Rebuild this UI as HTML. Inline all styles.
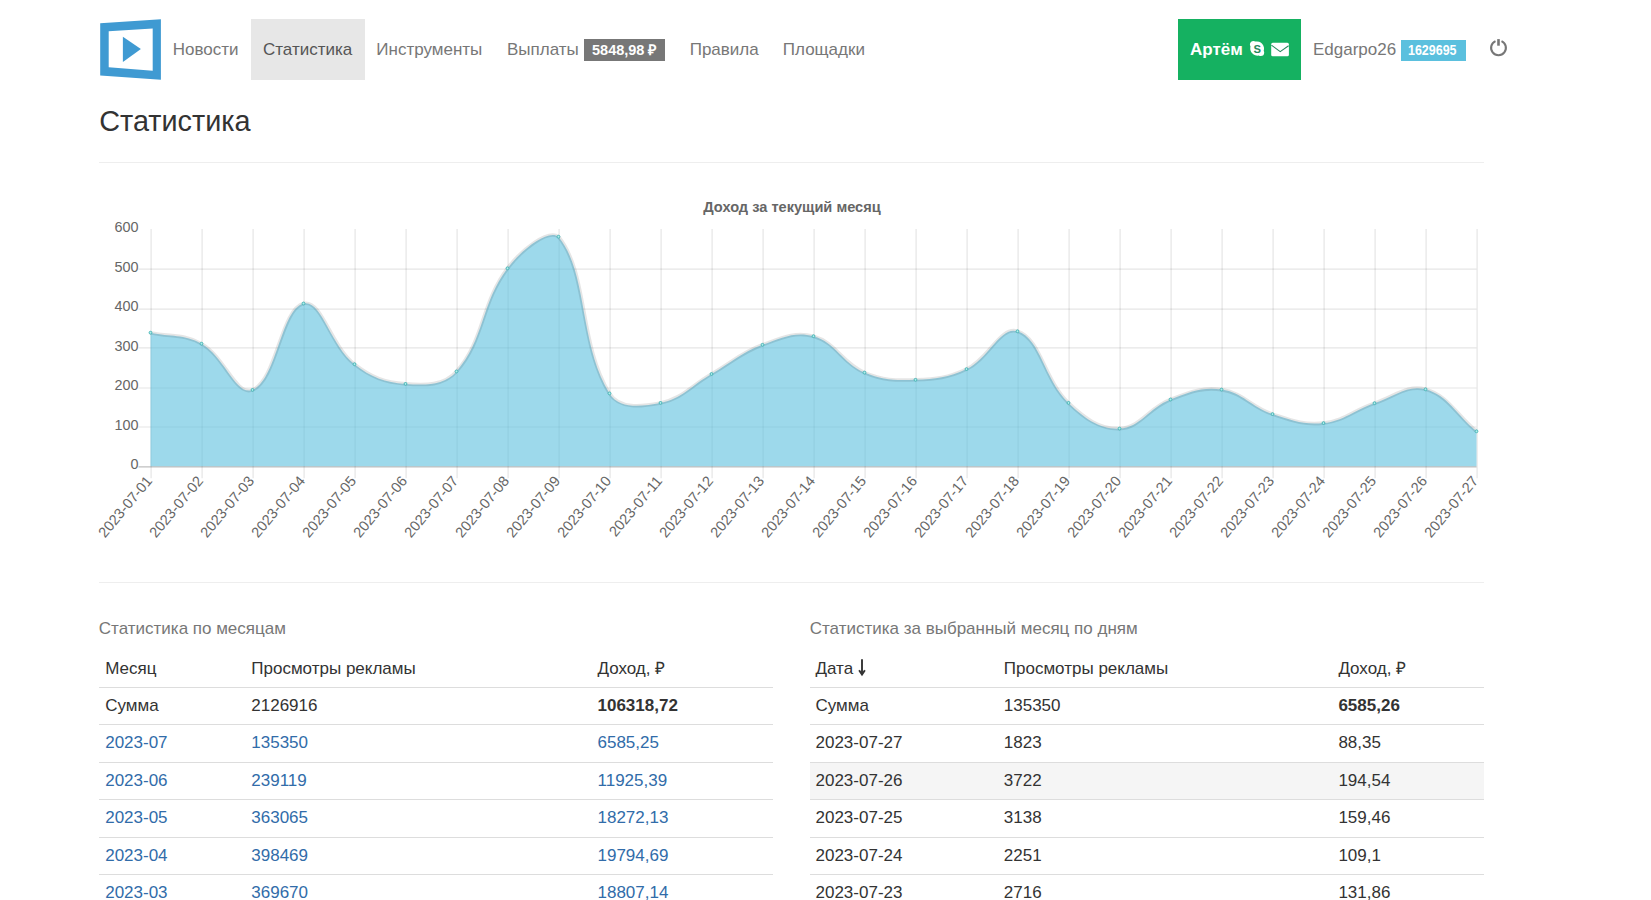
<!DOCTYPE html>
<html><head><meta charset="utf-8"><title>Статистика</title>
<style>
html,body{margin:0;padding:0;background:#fff;width:1651px;height:900px;overflow:hidden;position:relative;font-family:'Liberation Sans', sans-serif;}
.t{position:absolute;white-space:nowrap;line-height:1;font-family:'Liberation Sans', sans-serif;}
.r{position:absolute;}
.abs{position:absolute;}
</style></head><body>
<svg class="abs" style="left:0;top:0" width="200" height="100" viewBox="0 0 200 100">
<polygon fill="#3f9ad2" fill-rule="evenodd" points="100.2,23.3 160.9,19.2 160.9,79.8 100.2,75.4 100.2,23.3 108.7,31.3 108.7,67.2 152.7,70.7 152.7,28.5 108.7,31.3"/>
<polygon fill="#3f9ad2" points="122.9,36.7 140.9,49.1 122.9,62.0"/>
</svg>
<div class="t" style="left:172.8px;top:41px;font-size:17px;color:#777;">Новости</div>
<div class="r" style="left:251px;top:19px;width:114px;height:61px;background:#e7e7e7;"></div>
<div class="t" style="left:263px;top:41px;font-size:17px;color:#555;">Статистика</div>
<div class="t" style="left:376.3px;top:41px;font-size:17px;color:#777;">Инструменты</div>
<div class="t" style="left:507px;top:41px;font-size:17px;color:#777;">Выплаты</div>
<div class="r" style="left:584px;top:39px;width:81px;height:22px;background:#777;"></div>
<div class="t" style="left:592px;top:43px;font-size:14.5px;color:#fff;font-weight:bold;">5848,98 ₽</div>
<div class="t" style="left:689.7px;top:41px;font-size:17px;color:#777;">Правила</div>
<div class="t" style="left:782.8px;top:41px;font-size:17px;color:#777;">Площадки</div>
<div class="r" style="left:1178px;top:19px;width:123px;height:61px;background:#15b161;"></div>
<div class="t" style="left:1190px;top:41px;font-size:17px;color:#fff;font-weight:bold;">Артём</div>
<svg class="abs" style="left:1249px;top:40px" width="17" height="18" viewBox="0 0 17 18">
<path fill="#fff" d="M4.5 1.0 A3.5 3.5 0 0 0 0.9 4.6 c0 .8.3 1.4.6 2 A7.2 7.2 0 0 0 9.8 15.5 c.6.3 1.2.6 1.9.6 a3.5 3.5 0 0 0 3.5-3.5 c0-.7-.2-1.3-.5-1.9 A7.2 7.2 0 0 0 6.4 1.6 c-.6-.4-1.2-.6-1.9-.6z"/>
<text x="8.3" y="12.8" text-anchor="middle" font-family="Liberation Sans" font-weight="bold" font-size="11.2" fill="#24895c">S</text>
</svg>
<svg class="abs" style="left:1270px;top:42px" width="20" height="15" viewBox="0 0 20 15">
<rect x="1.2" y="0.8" width="17.7" height="13.4" rx="1.5" fill="#fff"/>
<path d="M1.4 3.1 L10.2 9.6 L18.6 3.8" fill="none" stroke="#2a8a60" stroke-width="1.1"/>
</svg>
<div class="t" style="left:1313px;top:41px;font-size:17px;color:#777;">Edgarpo26</div>
<div class="r" style="left:1401px;top:40px;width:65px;height:21px;background:#5bc0de;"></div>
<div class="t" style="left:1408.3px;top:43px;font-size:14px;color:#fff;font-weight:bold;transform:scaleX(0.89);transform-origin:0 0;">1629695</div>
<svg class="abs" style="left:1486px;top:36px" width="26" height="24" viewBox="0 0 26 24">
<path d="M9.5 5.1 A7.4 7.4 0 1 0 15.5 5.1" fill="none" stroke="#777" stroke-width="2.1"/>
<line x1="12.5" y1="3.1" x2="12.5" y2="9.7" stroke="#777" stroke-width="2.6"/>
</svg>
<div class="t" style="left:99.3px;top:107px;font-size:28.8px;color:#333;">Статистика</div>
<div class="r" style="left:99px;top:162px;width:1385px;height:1px;background:#eee;"></div>
<svg class="abs" style="left:0;top:0" width="1651" height="600" viewBox="0 0 1651 600">
<text x="792" y="212" text-anchor="middle" font-family="Liberation Sans" font-weight="bold" font-size="14.6" fill="#666">Доход за текущий месяц</text>
<line x1="138.5" y1="427.00" x2="1476.5" y2="427.00" stroke="rgba(0,0,0,0.1)" stroke-width="1.2"/>
<line x1="138.5" y1="388.00" x2="1476.5" y2="388.00" stroke="rgba(0,0,0,0.1)" stroke-width="1.2"/>
<line x1="138.5" y1="347.90" x2="1476.5" y2="347.90" stroke="rgba(0,0,0,0.1)" stroke-width="1.2"/>
<line x1="138.5" y1="309.10" x2="1476.5" y2="309.10" stroke="rgba(0,0,0,0.1)" stroke-width="1.2"/>
<line x1="138.5" y1="269.20" x2="1476.5" y2="269.20" stroke="rgba(0,0,0,0.1)" stroke-width="1.2"/>
<line x1="151.10" y1="229" x2="151.10" y2="478.2" stroke="rgba(0,0,0,0.1)" stroke-width="1.2"/>
<line x1="202.10" y1="229" x2="202.10" y2="478.2" stroke="rgba(0,0,0,0.1)" stroke-width="1.2"/>
<line x1="253.10" y1="229" x2="253.10" y2="478.2" stroke="rgba(0,0,0,0.1)" stroke-width="1.2"/>
<line x1="304.10" y1="229" x2="304.10" y2="478.2" stroke="rgba(0,0,0,0.1)" stroke-width="1.2"/>
<line x1="355.10" y1="229" x2="355.10" y2="478.2" stroke="rgba(0,0,0,0.1)" stroke-width="1.2"/>
<line x1="406.10" y1="229" x2="406.10" y2="478.2" stroke="rgba(0,0,0,0.1)" stroke-width="1.2"/>
<line x1="457.10" y1="229" x2="457.10" y2="478.2" stroke="rgba(0,0,0,0.1)" stroke-width="1.2"/>
<line x1="508.10" y1="229" x2="508.10" y2="478.2" stroke="rgba(0,0,0,0.1)" stroke-width="1.2"/>
<line x1="559.10" y1="229" x2="559.10" y2="478.2" stroke="rgba(0,0,0,0.1)" stroke-width="1.2"/>
<line x1="610.10" y1="229" x2="610.10" y2="478.2" stroke="rgba(0,0,0,0.1)" stroke-width="1.2"/>
<line x1="661.10" y1="229" x2="661.10" y2="478.2" stroke="rgba(0,0,0,0.1)" stroke-width="1.2"/>
<line x1="712.10" y1="229" x2="712.10" y2="478.2" stroke="rgba(0,0,0,0.1)" stroke-width="1.2"/>
<line x1="763.10" y1="229" x2="763.10" y2="478.2" stroke="rgba(0,0,0,0.1)" stroke-width="1.2"/>
<line x1="814.10" y1="229" x2="814.10" y2="478.2" stroke="rgba(0,0,0,0.1)" stroke-width="1.2"/>
<line x1="865.10" y1="229" x2="865.10" y2="478.2" stroke="rgba(0,0,0,0.1)" stroke-width="1.2"/>
<line x1="916.10" y1="229" x2="916.10" y2="478.2" stroke="rgba(0,0,0,0.1)" stroke-width="1.2"/>
<line x1="967.10" y1="229" x2="967.10" y2="478.2" stroke="rgba(0,0,0,0.1)" stroke-width="1.2"/>
<line x1="1018.10" y1="229" x2="1018.10" y2="478.2" stroke="rgba(0,0,0,0.1)" stroke-width="1.2"/>
<line x1="1069.10" y1="229" x2="1069.10" y2="478.2" stroke="rgba(0,0,0,0.1)" stroke-width="1.2"/>
<line x1="1120.10" y1="229" x2="1120.10" y2="478.2" stroke="rgba(0,0,0,0.1)" stroke-width="1.2"/>
<line x1="1171.10" y1="229" x2="1171.10" y2="478.2" stroke="rgba(0,0,0,0.1)" stroke-width="1.2"/>
<line x1="1222.10" y1="229" x2="1222.10" y2="478.2" stroke="rgba(0,0,0,0.1)" stroke-width="1.2"/>
<line x1="1273.10" y1="229" x2="1273.10" y2="478.2" stroke="rgba(0,0,0,0.1)" stroke-width="1.2"/>
<line x1="1324.10" y1="229" x2="1324.10" y2="478.2" stroke="rgba(0,0,0,0.1)" stroke-width="1.2"/>
<line x1="1375.10" y1="229" x2="1375.10" y2="478.2" stroke="rgba(0,0,0,0.1)" stroke-width="1.2"/>
<line x1="1426.10" y1="229" x2="1426.10" y2="478.2" stroke="rgba(0,0,0,0.1)" stroke-width="1.2"/>
<line x1="1477.10" y1="229" x2="1477.10" y2="478.2" stroke="rgba(0,0,0,0.1)" stroke-width="1.2"/>
<path d="M150.50,332.70 C170.90,337.10 183.91,333.83 201.50,343.70 C224.71,356.71 235.90,396.44 252.50,389.90 C276.70,380.36 280.71,309.24 303.50,303.50 C321.51,298.96 330.35,345.17 354.50,364.20 C371.15,377.33 384.69,382.43 405.50,383.90 C425.49,385.31 443.71,385.89 456.50,371.40 C484.51,339.65 480.69,303.71 507.50,268.30 C521.49,249.83 547.61,229.00 558.50,236.70 C588.41,273.38 578.47,342.84 609.50,393.40 C619.27,409.32 641.34,406.54 660.50,402.90 C682.14,398.78 691.13,385.61 711.50,374.00 C731.93,362.37 740.80,352.84 762.50,344.80 C781.60,337.72 795.05,331.17 813.50,336.20 C835.85,342.29 842.11,363.03 864.50,372.60 C882.91,380.47 895.22,380.50 915.50,379.80 C936.02,379.10 948.11,377.85 966.50,369.10 C988.91,358.45 1000.39,325.63 1017.50,331.30 C1041.19,339.15 1043.77,379.31 1068.50,402.90 C1084.57,418.23 1099.38,429.27 1119.50,428.60 C1140.18,427.91 1148.85,407.78 1170.50,399.50 C1189.65,392.18 1201.97,386.80 1221.50,389.60 C1242.77,392.64 1251.20,407.10 1272.50,414.10 C1292.00,420.50 1303.67,425.22 1323.50,423.10 C1344.47,420.86 1353.74,410.08 1374.50,403.20 C1394.54,396.56 1407.37,384.30 1425.50,389.30 C1448.17,395.54 1456.10,414.50 1476.50,431.30 L1476.50,466.20 L150.50,466.20 Z" fill="rgba(91,192,222,0.6)"/>
<path d="M150.50,332.70 C170.90,337.10 183.91,333.83 201.50,343.70 C224.71,356.71 235.90,396.44 252.50,389.90 C276.70,380.36 280.71,309.24 303.50,303.50 C321.51,298.96 330.35,345.17 354.50,364.20 C371.15,377.33 384.69,382.43 405.50,383.90 C425.49,385.31 443.71,385.89 456.50,371.40 C484.51,339.65 480.69,303.71 507.50,268.30 C521.49,249.83 547.61,229.00 558.50,236.70 C588.41,273.38 578.47,342.84 609.50,393.40 C619.27,409.32 641.34,406.54 660.50,402.90 C682.14,398.78 691.13,385.61 711.50,374.00 C731.93,362.37 740.80,352.84 762.50,344.80 C781.60,337.72 795.05,331.17 813.50,336.20 C835.85,342.29 842.11,363.03 864.50,372.60 C882.91,380.47 895.22,380.50 915.50,379.80 C936.02,379.10 948.11,377.85 966.50,369.10 C988.91,358.45 1000.39,325.63 1017.50,331.30 C1041.19,339.15 1043.77,379.31 1068.50,402.90 C1084.57,418.23 1099.38,429.27 1119.50,428.60 C1140.18,427.91 1148.85,407.78 1170.50,399.50 C1189.65,392.18 1201.97,386.80 1221.50,389.60 C1242.77,392.64 1251.20,407.10 1272.50,414.10 C1292.00,420.50 1303.67,425.22 1323.50,423.10 C1344.47,420.86 1353.74,410.08 1374.50,403.20 C1394.54,396.56 1407.37,384.30 1425.50,389.30 C1448.17,395.54 1456.10,414.50 1476.50,431.30" fill="none" stroke="rgba(0,0,0,0.1)" stroke-width="3.6"/>
<line x1="138.5" y1="466.8" x2="1476.5" y2="466.8" stroke="rgba(0,0,0,0.25)" stroke-width="1.2"/>
<circle cx="150.50" cy="332.70" r="1.4" fill="#b5ecec" stroke="#48b9b9" stroke-width="1.0"/>
<circle cx="201.50" cy="343.70" r="1.4" fill="#b5ecec" stroke="#48b9b9" stroke-width="1.0"/>
<circle cx="252.50" cy="389.90" r="1.4" fill="#b5ecec" stroke="#48b9b9" stroke-width="1.0"/>
<circle cx="303.50" cy="303.50" r="1.4" fill="#b5ecec" stroke="#48b9b9" stroke-width="1.0"/>
<circle cx="354.50" cy="364.20" r="1.4" fill="#b5ecec" stroke="#48b9b9" stroke-width="1.0"/>
<circle cx="405.50" cy="383.90" r="1.4" fill="#b5ecec" stroke="#48b9b9" stroke-width="1.0"/>
<circle cx="456.50" cy="371.40" r="1.4" fill="#b5ecec" stroke="#48b9b9" stroke-width="1.0"/>
<circle cx="507.50" cy="268.30" r="1.4" fill="#b5ecec" stroke="#48b9b9" stroke-width="1.0"/>
<circle cx="558.50" cy="236.70" r="1.4" fill="#b5ecec" stroke="#48b9b9" stroke-width="1.0"/>
<circle cx="609.50" cy="393.40" r="1.4" fill="#b5ecec" stroke="#48b9b9" stroke-width="1.0"/>
<circle cx="660.50" cy="402.90" r="1.4" fill="#b5ecec" stroke="#48b9b9" stroke-width="1.0"/>
<circle cx="711.50" cy="374.00" r="1.4" fill="#b5ecec" stroke="#48b9b9" stroke-width="1.0"/>
<circle cx="762.50" cy="344.80" r="1.4" fill="#b5ecec" stroke="#48b9b9" stroke-width="1.0"/>
<circle cx="813.50" cy="336.20" r="1.4" fill="#b5ecec" stroke="#48b9b9" stroke-width="1.0"/>
<circle cx="864.50" cy="372.60" r="1.4" fill="#b5ecec" stroke="#48b9b9" stroke-width="1.0"/>
<circle cx="915.50" cy="379.80" r="1.4" fill="#b5ecec" stroke="#48b9b9" stroke-width="1.0"/>
<circle cx="966.50" cy="369.10" r="1.4" fill="#b5ecec" stroke="#48b9b9" stroke-width="1.0"/>
<circle cx="1017.50" cy="331.30" r="1.4" fill="#b5ecec" stroke="#48b9b9" stroke-width="1.0"/>
<circle cx="1068.50" cy="402.90" r="1.4" fill="#b5ecec" stroke="#48b9b9" stroke-width="1.0"/>
<circle cx="1119.50" cy="428.60" r="1.4" fill="#b5ecec" stroke="#48b9b9" stroke-width="1.0"/>
<circle cx="1170.50" cy="399.50" r="1.4" fill="#b5ecec" stroke="#48b9b9" stroke-width="1.0"/>
<circle cx="1221.50" cy="389.60" r="1.4" fill="#b5ecec" stroke="#48b9b9" stroke-width="1.0"/>
<circle cx="1272.50" cy="414.10" r="1.4" fill="#b5ecec" stroke="#48b9b9" stroke-width="1.0"/>
<circle cx="1323.50" cy="423.10" r="1.4" fill="#b5ecec" stroke="#48b9b9" stroke-width="1.0"/>
<circle cx="1374.50" cy="403.20" r="1.4" fill="#b5ecec" stroke="#48b9b9" stroke-width="1.0"/>
<circle cx="1425.50" cy="389.30" r="1.4" fill="#b5ecec" stroke="#48b9b9" stroke-width="1.0"/>
<circle cx="1476.50" cy="431.30" r="1.4" fill="#b5ecec" stroke="#48b9b9" stroke-width="1.0"/>
<text x="138.6" y="469.40" text-anchor="end" font-family="Liberation Sans" font-size="14.4" fill="#666">0</text>
<text x="138.6" y="429.87" text-anchor="end" font-family="Liberation Sans" font-size="14.4" fill="#666">100</text>
<text x="138.6" y="390.34" text-anchor="end" font-family="Liberation Sans" font-size="14.4" fill="#666">200</text>
<text x="138.6" y="350.81" text-anchor="end" font-family="Liberation Sans" font-size="14.4" fill="#666">300</text>
<text x="138.6" y="311.28" text-anchor="end" font-family="Liberation Sans" font-size="14.4" fill="#666">400</text>
<text x="138.6" y="271.75" text-anchor="end" font-family="Liberation Sans" font-size="14.4" fill="#666">500</text>
<text x="138.6" y="232.22" text-anchor="end" font-family="Liberation Sans" font-size="14.4" fill="#666">600</text>
<text transform="translate(149.10,478) rotate(-50)" x="0" y="5" text-anchor="end" font-family="Liberation Sans" font-size="14.6" fill="#666">2023-07-01</text>
<text transform="translate(200.10,478) rotate(-50)" x="0" y="5" text-anchor="end" font-family="Liberation Sans" font-size="14.6" fill="#666">2023-07-02</text>
<text transform="translate(251.10,478) rotate(-50)" x="0" y="5" text-anchor="end" font-family="Liberation Sans" font-size="14.6" fill="#666">2023-07-03</text>
<text transform="translate(302.10,478) rotate(-50)" x="0" y="5" text-anchor="end" font-family="Liberation Sans" font-size="14.6" fill="#666">2023-07-04</text>
<text transform="translate(353.10,478) rotate(-50)" x="0" y="5" text-anchor="end" font-family="Liberation Sans" font-size="14.6" fill="#666">2023-07-05</text>
<text transform="translate(404.10,478) rotate(-50)" x="0" y="5" text-anchor="end" font-family="Liberation Sans" font-size="14.6" fill="#666">2023-07-06</text>
<text transform="translate(455.10,478) rotate(-50)" x="0" y="5" text-anchor="end" font-family="Liberation Sans" font-size="14.6" fill="#666">2023-07-07</text>
<text transform="translate(506.10,478) rotate(-50)" x="0" y="5" text-anchor="end" font-family="Liberation Sans" font-size="14.6" fill="#666">2023-07-08</text>
<text transform="translate(557.10,478) rotate(-50)" x="0" y="5" text-anchor="end" font-family="Liberation Sans" font-size="14.6" fill="#666">2023-07-09</text>
<text transform="translate(608.10,478) rotate(-50)" x="0" y="5" text-anchor="end" font-family="Liberation Sans" font-size="14.6" fill="#666">2023-07-10</text>
<text transform="translate(659.10,478) rotate(-50)" x="0" y="5" text-anchor="end" font-family="Liberation Sans" font-size="14.6" fill="#666">2023-07-11</text>
<text transform="translate(710.10,478) rotate(-50)" x="0" y="5" text-anchor="end" font-family="Liberation Sans" font-size="14.6" fill="#666">2023-07-12</text>
<text transform="translate(761.10,478) rotate(-50)" x="0" y="5" text-anchor="end" font-family="Liberation Sans" font-size="14.6" fill="#666">2023-07-13</text>
<text transform="translate(812.10,478) rotate(-50)" x="0" y="5" text-anchor="end" font-family="Liberation Sans" font-size="14.6" fill="#666">2023-07-14</text>
<text transform="translate(863.10,478) rotate(-50)" x="0" y="5" text-anchor="end" font-family="Liberation Sans" font-size="14.6" fill="#666">2023-07-15</text>
<text transform="translate(914.10,478) rotate(-50)" x="0" y="5" text-anchor="end" font-family="Liberation Sans" font-size="14.6" fill="#666">2023-07-16</text>
<text transform="translate(965.10,478) rotate(-50)" x="0" y="5" text-anchor="end" font-family="Liberation Sans" font-size="14.6" fill="#666">2023-07-17</text>
<text transform="translate(1016.10,478) rotate(-50)" x="0" y="5" text-anchor="end" font-family="Liberation Sans" font-size="14.6" fill="#666">2023-07-18</text>
<text transform="translate(1067.10,478) rotate(-50)" x="0" y="5" text-anchor="end" font-family="Liberation Sans" font-size="14.6" fill="#666">2023-07-19</text>
<text transform="translate(1118.10,478) rotate(-50)" x="0" y="5" text-anchor="end" font-family="Liberation Sans" font-size="14.6" fill="#666">2023-07-20</text>
<text transform="translate(1169.10,478) rotate(-50)" x="0" y="5" text-anchor="end" font-family="Liberation Sans" font-size="14.6" fill="#666">2023-07-21</text>
<text transform="translate(1220.10,478) rotate(-50)" x="0" y="5" text-anchor="end" font-family="Liberation Sans" font-size="14.6" fill="#666">2023-07-22</text>
<text transform="translate(1271.10,478) rotate(-50)" x="0" y="5" text-anchor="end" font-family="Liberation Sans" font-size="14.6" fill="#666">2023-07-23</text>
<text transform="translate(1322.10,478) rotate(-50)" x="0" y="5" text-anchor="end" font-family="Liberation Sans" font-size="14.6" fill="#666">2023-07-24</text>
<text transform="translate(1373.10,478) rotate(-50)" x="0" y="5" text-anchor="end" font-family="Liberation Sans" font-size="14.6" fill="#666">2023-07-25</text>
<text transform="translate(1424.10,478) rotate(-50)" x="0" y="5" text-anchor="end" font-family="Liberation Sans" font-size="14.6" fill="#666">2023-07-26</text>
<text transform="translate(1475.10,478) rotate(-50)" x="0" y="5" text-anchor="end" font-family="Liberation Sans" font-size="14.6" fill="#666">2023-07-27</text>
</svg>
<div class="r" style="left:99px;top:582px;width:1385px;height:1px;background:#eee;"></div>
<div class="t" style="left:98.8px;top:620px;font-size:17px;color:#777;">Статистика по месяцам</div>
<div class="t" style="left:809.7px;top:620px;font-size:17px;color:#777;">Статистика за выбранный месяц по дням</div>
<div class="r" style="left:810px;top:763px;width:674px;height:36px;background:#f5f5f5;"></div>
<div class="r" style="left:99px;top:687px;width:674px;height:1px;background:#ddd;"></div>
<div class="r" style="left:810px;top:687px;width:674px;height:1px;background:#ddd;"></div>
<div class="r" style="left:99px;top:724px;width:674px;height:1px;background:#ddd;"></div>
<div class="r" style="left:810px;top:724px;width:674px;height:1px;background:#ddd;"></div>
<div class="r" style="left:99px;top:762px;width:674px;height:1px;background:#ddd;"></div>
<div class="r" style="left:810px;top:762px;width:674px;height:1px;background:#ddd;"></div>
<div class="r" style="left:99px;top:799px;width:674px;height:1px;background:#ddd;"></div>
<div class="r" style="left:810px;top:799px;width:674px;height:1px;background:#ddd;"></div>
<div class="r" style="left:99px;top:837px;width:674px;height:1px;background:#ddd;"></div>
<div class="r" style="left:810px;top:837px;width:674px;height:1px;background:#ddd;"></div>
<div class="r" style="left:99px;top:874px;width:674px;height:1px;background:#ddd;"></div>
<div class="r" style="left:810px;top:874px;width:674px;height:1px;background:#ddd;"></div>
<div class="t" style="left:105.2px;top:660px;font-size:17px;color:#333;">Месяц</div>
<div class="t" style="left:251.3px;top:660px;font-size:17px;color:#333;">Просмотры рекламы</div>
<div class="t" style="left:597.5px;top:660px;font-size:17px;color:#333;">Доход, ₽</div>
<div class="t" style="left:105.2px;top:697px;font-size:17px;color:#333;">Сумма</div>
<div class="t" style="left:251.3px;top:697px;font-size:17px;color:#333;">2126916</div>
<div class="t" style="left:597.5px;top:697px;font-size:17px;color:#333;font-weight:bold;">106318,72</div>
<div class="t" style="left:105.2px;top:734px;font-size:17px;color:#316ca9;">2023-07</div>
<div class="t" style="left:251.3px;top:734px;font-size:17px;color:#316ca9;">135350</div>
<div class="t" style="left:597.5px;top:734px;font-size:17px;color:#316ca9;">6585,25</div>
<div class="t" style="left:105.2px;top:772px;font-size:17px;color:#316ca9;">2023-06</div>
<div class="t" style="left:251.3px;top:772px;font-size:17px;color:#316ca9;">239119</div>
<div class="t" style="left:597.5px;top:772px;font-size:17px;color:#316ca9;">11925,39</div>
<div class="t" style="left:105.2px;top:809px;font-size:17px;color:#316ca9;">2023-05</div>
<div class="t" style="left:251.3px;top:809px;font-size:17px;color:#316ca9;">363065</div>
<div class="t" style="left:597.5px;top:809px;font-size:17px;color:#316ca9;">18272,13</div>
<div class="t" style="left:105.2px;top:847px;font-size:17px;color:#316ca9;">2023-04</div>
<div class="t" style="left:251.3px;top:847px;font-size:17px;color:#316ca9;">398469</div>
<div class="t" style="left:597.5px;top:847px;font-size:17px;color:#316ca9;">19794,69</div>
<div class="t" style="left:105.2px;top:884px;font-size:17px;color:#316ca9;">2023-03</div>
<div class="t" style="left:251.3px;top:884px;font-size:17px;color:#316ca9;">369670</div>
<div class="t" style="left:597.5px;top:884px;font-size:17px;color:#316ca9;">18807,14</div>
<div class="t" style="left:815.5px;top:660px;font-size:17px;color:#333;">Дата</div>
<svg class="abs" style="left:856px;top:657px" width="12" height="20" viewBox="0 0 12 20">
<line x1="6" y1="2.3" x2="6" y2="16.5" stroke="#333" stroke-width="1.9"/>
<path d="M3.1 13.2 L6 17.6 L8.9 13.2" fill="none" stroke="#333" stroke-width="1.9" stroke-linejoin="miter"/>
</svg>
<div class="t" style="left:1003.8px;top:660px;font-size:17px;color:#333;">Просмотры рекламы</div>
<div class="t" style="left:1338.4px;top:660px;font-size:17px;color:#333;">Доход, ₽</div>
<div class="t" style="left:815.5px;top:697px;font-size:17px;color:#333;">Сумма</div>
<div class="t" style="left:1003.8px;top:697px;font-size:17px;color:#333;">135350</div>
<div class="t" style="left:1338.4px;top:697px;font-size:17px;color:#333;font-weight:bold;">6585,26</div>
<div class="t" style="left:815.5px;top:734px;font-size:17px;color:#333;">2023-07-27</div>
<div class="t" style="left:1003.8px;top:734px;font-size:17px;color:#333;">1823</div>
<div class="t" style="left:1338.4px;top:734px;font-size:17px;color:#333;">88,35</div>
<div class="t" style="left:815.5px;top:772px;font-size:17px;color:#333;">2023-07-26</div>
<div class="t" style="left:1003.8px;top:772px;font-size:17px;color:#333;">3722</div>
<div class="t" style="left:1338.4px;top:772px;font-size:17px;color:#333;">194,54</div>
<div class="t" style="left:815.5px;top:809px;font-size:17px;color:#333;">2023-07-25</div>
<div class="t" style="left:1003.8px;top:809px;font-size:17px;color:#333;">3138</div>
<div class="t" style="left:1338.4px;top:809px;font-size:17px;color:#333;">159,46</div>
<div class="t" style="left:815.5px;top:847px;font-size:17px;color:#333;">2023-07-24</div>
<div class="t" style="left:1003.8px;top:847px;font-size:17px;color:#333;">2251</div>
<div class="t" style="left:1338.4px;top:847px;font-size:17px;color:#333;">109,1</div>
<div class="t" style="left:815.5px;top:884px;font-size:17px;color:#333;">2023-07-23</div>
<div class="t" style="left:1003.8px;top:884px;font-size:17px;color:#333;">2716</div>
<div class="t" style="left:1338.4px;top:884px;font-size:17px;color:#333;">131,86</div>
</body></html>
